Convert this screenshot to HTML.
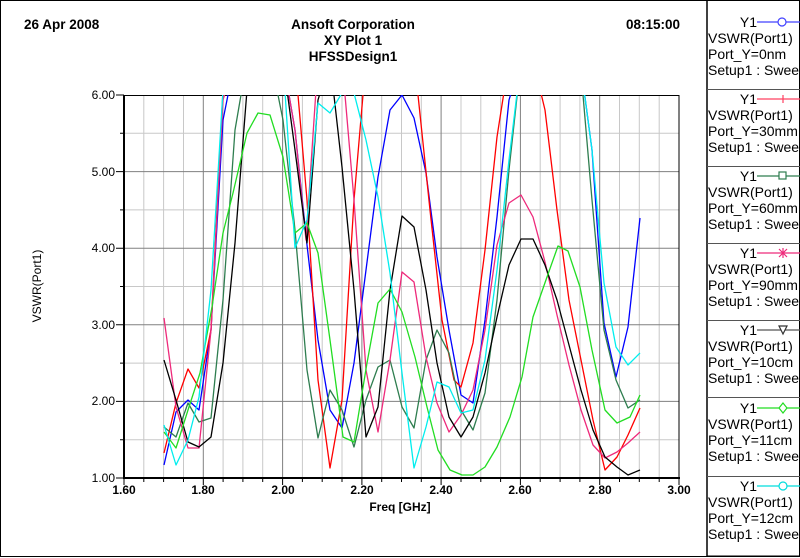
<!DOCTYPE html>
<html><head><meta charset="utf-8"><style>
html,body{margin:0;padding:0;background:#fff;}
svg{display:block;font-family:"Liberation Sans",Arial,sans-serif;}
</style></head><body>
<svg width="800" height="558" viewBox="0 0 800 558" xmlns="http://www.w3.org/2000/svg">
<rect x="0.5" y="0.5" width="799" height="556" fill="#fff" stroke="#000" stroke-width="1"/>
<defs><clipPath id="c"><rect x="124" y="95" width="555" height="383"/></clipPath></defs>
<g stroke="#c8c8c8" stroke-width="1">
<path d="M143.8 95V478M163.6 95V478M183.5 95V478M223.1 95V478M242.9 95V478M262.7 95V478M302.4 95V478M322.2 95V478M342 95V478M381.7 95V478M401.5 95V478M421.3 95V478M461 95V478M480.8 95V478M500.6 95V478M540.2 95V478M560.1 95V478M579.9 95V478M619.5 95V478M639.3 95V478M659.2 95V478"/>
<path d="M124 439.7H679M124 363.1H679M124 286.5H679M124 209.9H679M124 133.3H679"/>
</g>
<g stroke="#808080" stroke-width="1">
<path d="M203.3 95V478M282.6 95V478M361.9 95V478M441.1 95V478M520.4 95V478M599.7 95V478"/>
<path d="M124 401.4H679M124 324.8H679M124 248.2H679M124 171.6H679"/>
</g>
<g stroke="#000" stroke-width="1">
<path d="M143.8 478v4M163.6 478v4M183.5 478v4M223.1 478v4M242.9 478v4M262.7 478v4M302.4 478v4M322.2 478v4M342 478v4M381.7 478v4M401.5 478v4M421.3 478v4M461 478v4M480.8 478v4M500.6 478v4M540.2 478v4M560.1 478v4M579.9 478v4M619.5 478v4M639.3 478v4M659.2 478v4"/>
<path d="M124 478v7M203.3 478v7M282.6 478v7M361.9 478v7M441.1 478v7M520.4 478v7M599.7 478v7M679 478v7"/>
<path d="M116 95h8M116 171.6h8M116 248.2h8M116 324.8h8M116 401.4h8M116 478h8"/>
<path d="M120 133.3h4M120 209.9h4M120 286.5h4M120 363.1h4M120 439.7h4"/>
</g>
<rect x="124.5" y="95.5" width="554.5" height="382.5" fill="none" stroke="#000" stroke-width="1"/>
<path d="M124 95V479M123 478H680" stroke="#000" stroke-width="2"/>
<g clip-path="url(#c)" fill="none" stroke-width="1.3" stroke-linejoin="round">
<polyline stroke="#0000ff" points="164,465 176,412 188,400 199,410 211,330 223,120 235,60 283,60 295,130 307,245 318,340 330,410 342,428 354,363 366,270 378,177 390,110 402,95 414,118 426,173 437,257 449,330 461,395 473,403 485,320 497,217 509,100 521,60 580,60 592,150 604,323 616,377 628,327 640,218"/>
<polyline stroke="#ff0000" points="164,453 176,403 188,369 199,388 211,330 223,90 235,60 295,60 307,200 318,380 330,468 342,400 354,200 366,60 406,60 418,95 430,210 442,320 454,380 461,387 473,343 485,250 497,137 509,60 533,60 545,110 557,210 569,300 581,360 593,420 605,470 617,457 628,435 640,408"/>
<polyline stroke="#2e7d4f" points="164,427 176,437 188,403 199,422 211,418 223,300 235,130 247,60 271,60 283,120 295,230 307,370 318,438 330,390 342,410 354,447 366,400 378,367 390,360 402,407 414,428 426,360 437,330 449,353 461,410 473,430 485,393 497,300 509,170 521,60 580,60 592,200 604,330 616,380 628,408 640,400"/>
<polyline stroke="#ee2a7b" points="164,318 176,407 188,448 199,448 211,330 223,100 235,60 283,60 295,130 306,240 318,60 342,60 354,200 366,370 378,432 390,360 402,272 414,282 426,357 437,403 449,432 461,415 473,390 485,330 497,245 509,203 521,195 533,217 545,262 557,315 569,365 581,410 593,445 605,458 617,452 628,443 640,432"/>
<polyline stroke="#000000" points="164,360 176,400 188,442 199,447 211,437 223,363 235,243 247,90 259,60 283,60 295,150 307,243 318,100 330,60 342,167 354,290 366,437 378,407 390,290 402,216 414,227 426,290 437,363 449,417 461,437 473,417 485,373 497,317 509,265 521,239 533,239 545,265 557,300 569,345 581,390 593,430 605,457 617,467 628,475 640,470"/>
<polyline stroke="#22dd22" points="164,432 176,448 188,410 200,373 212,307 223,233 233,193 247,133 258,113 270,115 283,157 295,233 307,223 318,253 330,340 343,437 354,442 367,363 378,303 390,289 402,312 415,357 427,407 438,450 450,470 462,475 473,475 485,467 497,447 510,417 522,377 533,317 547,277 558,246 568,251 580,287 592,350 605,410 617,423 630,417 640,395"/>
<polyline stroke="#00eeee" points="164,425 176,465 188,440 199,397 211,290 223,90 235,60 283,60 295,248 307,220 318,103 330,113 342,93 354,93 366,140 378,197 390,273 402,373 414,468 426,427 437,382 449,387 461,413 473,410 485,360 497,270 509,160 521,60 580,60 592,150 604,283 616,347 628,365 640,353"/>
</g>
<g font-size="12" fill="#000" text-anchor="end">
<text x="115" y="99">6.00</text><text x="115" y="176">5.00</text><text x="115" y="252">4.00</text><text x="115" y="329">3.00</text><text x="115" y="405">2.00</text><text x="115" y="482">1.00</text>
</g>
<g font-size="12" font-weight="bold" fill="#000" text-anchor="middle">
<text x="124" y="494">1.60</text><text x="203" y="494">1.80</text><text x="283" y="494">2.00</text><text x="362" y="494">2.20</text><text x="441" y="494">2.40</text><text x="520" y="494">2.60</text><text x="600" y="494">2.80</text><text x="679" y="494">3.00</text>
<text x="400" y="511">Freq [GHz]</text>
</g>
<text transform="translate(41,286) rotate(-90)" font-size="12" text-anchor="middle">VSWR(Port1)</text>
<g font-size="13.5" font-weight="bold" fill="#000">
<text x="24" y="29">26 Apr 2008</text>
<text x="626" y="29">08:15:00</text>
<text x="353" y="29" text-anchor="middle">Ansoft Corporation</text>
<text x="353" y="45" text-anchor="middle">XY Plot 1</text>
<text x="353" y="61" text-anchor="middle">HFSSDesign1</text>
</g>
<path d="M707 0V556" stroke="#000" stroke-width="1.5"/>
<g stroke="#555" stroke-width="1"><path d="M707 89.5H800M707 166.5H800M707 243.5H800M707 320.5H800M707 397.5H800M707 476.5H800"/></g>
<g font-size="14" fill="#000">
<text x="757" y="27" text-anchor="end">Y1</text><text x="708" y="43">VSWR(Port1)</text><text x="708" y="59">Port_Y=0nm</text><text x="708" y="75">Setup1 : Swee</text>
<text x="757" y="104" text-anchor="end">Y1</text><text x="708" y="120">VSWR(Port1)</text><text x="708" y="136">Port_Y=30mm</text><text x="708" y="152">Setup1 : Swee</text>
<text x="757" y="181" text-anchor="end">Y1</text><text x="708" y="197">VSWR(Port1)</text><text x="708" y="213">Port_Y=60mm</text><text x="708" y="229">Setup1 : Swee</text>
<text x="757" y="258" text-anchor="end">Y1</text><text x="708" y="274">VSWR(Port1)</text><text x="708" y="290">Port_Y=90mm</text><text x="708" y="306">Setup1 : Swee</text>
<text x="757" y="335" text-anchor="end">Y1</text><text x="708" y="351">VSWR(Port1)</text><text x="708" y="367">Port_Y=10cm</text><text x="708" y="383">Setup1 : Swee</text>
<text x="757" y="413" text-anchor="end">Y1</text><text x="708" y="429">VSWR(Port1)</text><text x="708" y="445">Port_Y=11cm</text><text x="708" y="461">Setup1 : Swee</text>
<text x="757" y="491" text-anchor="end">Y1</text><text x="708" y="507">VSWR(Port1)</text><text x="708" y="523">Port_Y=12cm</text><text x="708" y="539">Setup1 : Swee</text>
</g>
<g fill="none" stroke-width="1.2">
<path d="M757 22H800" stroke="#4040ff"/><circle cx="782" cy="22" r="4" stroke="#4040ff" fill="#fff"/>
<path d="M757 99H800" stroke="#ff4060"/><path d="M783 95v8" stroke="#ff4060"/>
<path d="M757 176H800" stroke="#2e7d4f"/><rect x="779" y="172" width="7" height="7" stroke="#2e7d4f" fill="#fff"/>
<path d="M757 253H800" stroke="#ee2a7b"/><path d="M779 249l8 8M787 249l-8 8M783 248v10" stroke="#ee2a7b"/>
<path d="M757 330H800" stroke="#555"/><path d="M779 326h8l-4 8z" stroke="#333" fill="#fff"/>
<path d="M757 408H800" stroke="#22dd22"/><path d="M783 403l4 5-4 5-4-5z" stroke="#22dd22" fill="#fff"/>
<path d="M757 486H800" stroke="#00dddd"/><circle cx="783" cy="486" r="4" stroke="#00dddd" fill="#fff"/>
</g>
<path d="M707 556H800" stroke="#000"/>
</svg>
</body></html>
